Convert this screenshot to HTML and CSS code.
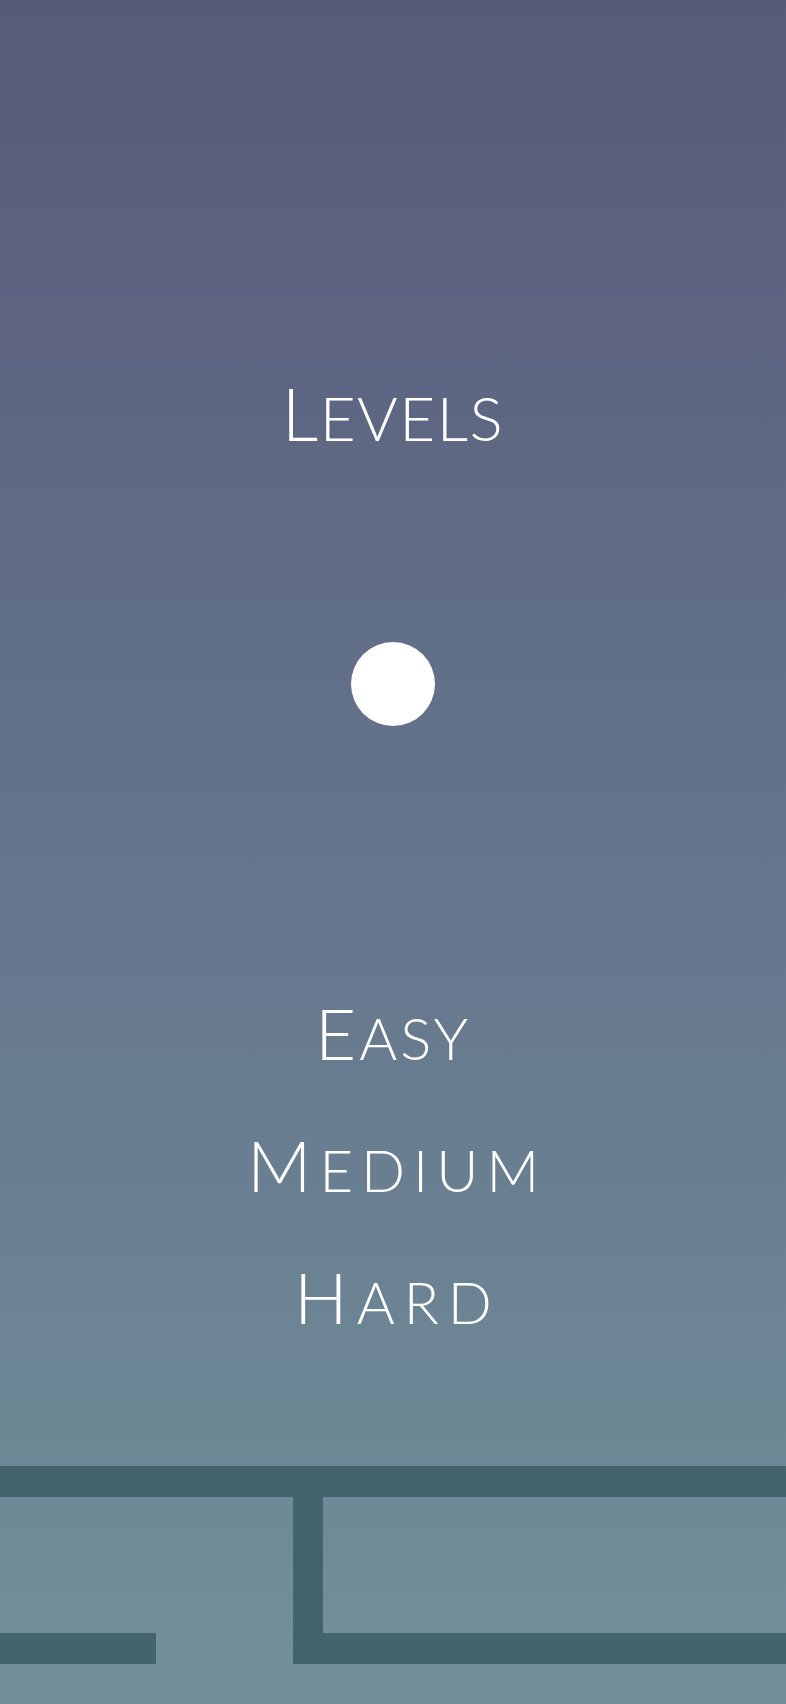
FILE: index.html
```html
<!DOCTYPE html>
<html>
<head>
<meta charset="utf-8">
<link rel="stylesheet" href="styles.css">
</head>
<body>
<main class="screen">
  <h1 class="title">Levels</h1>
  <div class="dot"></div>
  <nav class="menu">
    <a class="item item-easy">Easy</a>
    <a class="item item-medium">Medium</a>
    <a class="item item-hard">Hard</a>
  </nav>
  <svg class="maze" width="786" height="238" viewBox="0 0 786 238">
    <rect x="0" y="0" width="786" height="31" />
    <rect x="293" y="31" width="30" height="167" />
    <rect x="293" y="167" width="493" height="31" />
    <rect x="0" y="167" width="156" height="31" />
  </svg>
</main>
</body>
</html>
```
FILE: styles.css
```css
html, body {
  margin: 0;
  padding: 0;
}
body {
  width: 786px;
  height: 1704px;
  overflow: hidden;
  background: linear-gradient(180deg, #575a79 0%, #63728a 45%, #72909a 100%);
  color: #ffffff;
  font-family: "Lato", "Open Sans", "DejaVu Sans", sans-serif;
  font-weight: 300;
}
.screen {
  display: flex;
  flex-direction: column;
  align-items: center;
  height: 1704px;
}
.title {
  margin: 373px 0 0;
  height: 80px;
  font-size: 62px;
  font-weight: 300;
  line-height: 80px;
  text-transform: uppercase;
  letter-spacing: 1.5px;
}
.title::first-letter {
  font-size: 72px;
}
.dot {
  margin-top: 189px;
  width: 84px;
  height: 84px;
  border-radius: 50%;
  background: #ffffff;
}
.menu {
  margin-top: 241px;
  display: flex;
  flex-direction: column;
  align-items: center;
}
.item {
  display: block;
  height: 132px;
  font-size: 58px;
  line-height: 131px;
  text-transform: uppercase;
  letter-spacing: 3px;
}
.item::first-letter {
  font-size: 71px;
}
.item-medium {
  letter-spacing: 8px;
  margin-right: -8px;
}
.item-hard {
  letter-spacing: 9px;
  margin-right: -9px;
}
.maze {
  margin-top: auto;
  display: block;
  fill: #43636d;
}
```
